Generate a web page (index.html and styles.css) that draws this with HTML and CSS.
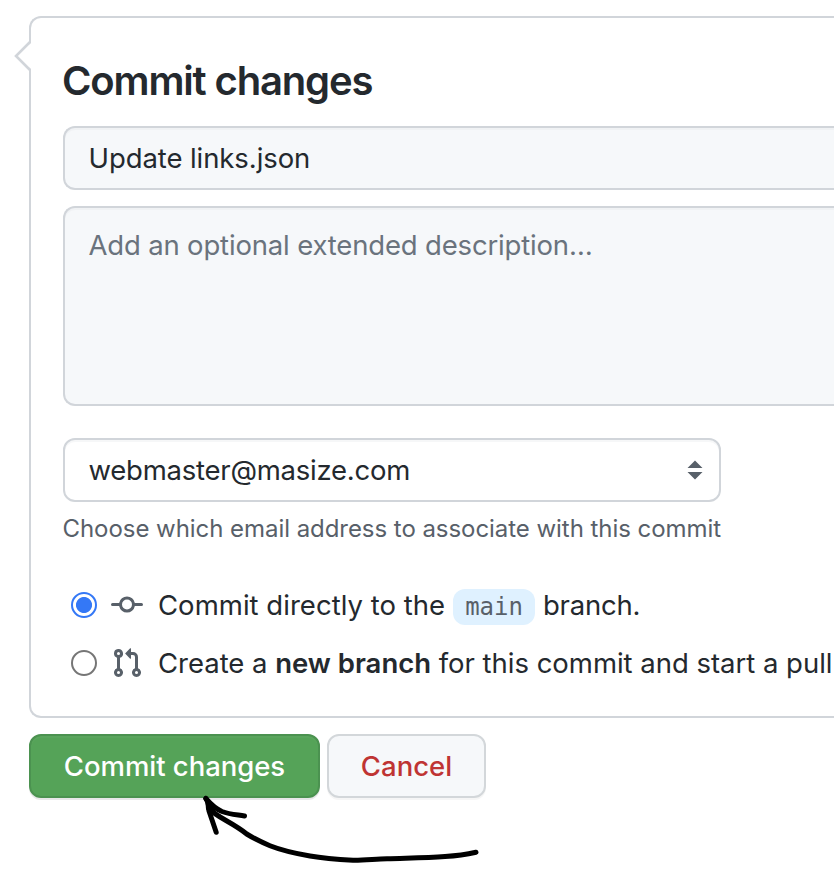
FILE: index.html
```html
<!DOCTYPE html>
<html lang="en">
<head>
<meta charset="utf-8">
<title>Commit changes</title>
<link rel="stylesheet" href="styles.css">
</head>
<body>
<form class="commit-form">
  <section class="panel">
    <svg class="caret" width="18" height="30" viewBox="0 0 18 30"><path class="caret-fill" d="M18 1 2 15l16 14z"/><path class="caret-line" d="M16 1 2 15l14 14"/></svg>
    <h1 class="title">Commit changes</h1>
    <div class="field summary"><span>Update links.json</span></div>
    <div class="field description"><span>Add an optional extended description…</span></div>
    <div class="field select">
      <span>webmaster@masize.com</span>
      <svg class="chevrons" width="16" height="20" viewBox="0 0 16 20"><path d="M8 0.5 15.5 8H.5zM8 19.500.5 12h15z"/></svg>
    </div>
    <p class="note">Choose which email address to associate with this commit</p>
    <div class="choices">
      <label class="choice">
        <input class="radio" type="radio" name="target" checked>
        <svg class="icon" width="32" height="32" viewBox="0 0 16 16"><path fill-rule="evenodd" d="M10.5 7.75a2.5 2.5 0 11-5 0 2.5 2.5 0 015 0zm1.43.75a4.002 4.002 0 01-7.86 0H.75a.75.75 0 110-1.5h3.32a4.001 4.001 0 017.86 0h3.32a.75.75 0 110 1.500h-3.320z"/></svg>
        <span class="t-direct">Commit directly to the</span>
        <code class="branch">main</code>
        <span class="t-branch">branch.</span>
      </label>
      <label class="choice">
        <input class="radio" type="radio" name="target">
        <svg class="icon" width="32" height="32" viewBox="0 0 16 16"><path fill-rule="evenodd" d="M7.177 3.073L9.573.677A.25.25 0 0110 .854v4.792a.25.25 0 01-.427.177L7.177 3.427a.25.25 0 010-.354zM3.75 2.5a.75.75 0 100 1.5.75.75 0 000-1.5zm-2.25.75a2.25 2.25 0 113 2.122v5.256a2.251 2.251 0 11-1.5 0V5.372A2.25 2.25 0 011.5 3.25zM11 2.5h-1V4h1a1 1 0 011 1v5.628a2.251 2.251 0 101.5 0V5A2.5 2.5 0 0011 2.5zm1 10.25a.75.75 0 111.5 0 .75.75 0 01-1.5 0zM3.75 12a.75.75 0 100 1.5.75.75 0 000-1.5z"/></svg>
        <span class="t-create">Create a <b>new branch</b> for this commit and start a pull</span>
      </label>
    </div>
  </section>
  <div class="actions">
    <button class="btn primary" type="button">Commit changes</button>
    <button class="btn danger" type="button">Cancel</button>
  </div>
</form>
<svg class="arrow" width="290" height="76" viewBox="198 792 290 76">
  <path d="M476 852.300C467 854.500 457 856 445 856.500C426 858 406 858 387 858.700C375 859 364 860.500 353 860.300C338 859.500 324 858.500 310 856C296 853.500 282 850.500 270 845.700C261 842 254 838.500 246.700 834C240 828.500 233 824.500 226 820.500C219 816.500 212 812 208.500 808"/>
  <path d="M205.800 798.500C211 804.500 216 809 222 811.500C230 814.500 237 814.700 244.500 816"/>
  <path d="M205.800 798.500C209 802 207.500 805 209 811L216.200 832.300M209 804L213 810"/>
</svg>
</body>
</html>
```
FILE: styles.css
```css
* { box-sizing: border-box; }

body {
  margin: 0;
  width: 834px;
  height: 870px;
  overflow: hidden;
  background: #fff;
  color: #24292e;
  font: 27.5px/40px Inter, "Liberation Sans", sans-serif;
  white-space: nowrap;
}

.commit-form { padding: 16px 0 0 29px; }

.panel {
  position: relative;
  height: 702px;
  padding: 32px 0 32px 32px;
  border: 2px solid #d1d5da;
  border-right: 0;
  border-radius: 12px 0 0 12px;
}

.caret { position: absolute; left: -17px; top: 23px; }
.caret-fill { fill: #fff; }
.caret-line { fill: none; stroke: #d1d5da; stroke-width: 2.6; }

.title {
  margin: 0 0 15px -1px;
  padding-top: 1px;
  font-size: 40px;
  line-height: 60px;
  font-weight: 600;
  letter-spacing: -1.15px;
}

.field {
  display: flex;
  align-items: center;
  padding: 0 23.5px;
  border: 2px solid #d1d5da;
  border-right: 0;
  border-radius: 12px 0 0 12px;
  background: #f6f8fa;
  box-shadow: inset 0 2px 0 rgba(225, 228, 232, 0.3);
}

.summary { height: 64px; margin-bottom: 16px; letter-spacing: -0.08px; }

.description {
  height: 200px;
  margin-bottom: 32px;
  padding-top: 17px;
  align-items: flex-start;
  color: #6a737d;
  letter-spacing: -0.17px;
}

.select {
  justify-content: space-between;
  width: 658px;
  height: 64px;
  padding-right: 16px;
  border-right: 2px solid #d1d5da;
  border-radius: 12px;
  background: #fff;
  letter-spacing: -0.24px;
}

.chevrons { fill: #586069; }

.note {
  margin: 9px 0 37px -0.5px;
  color: #586069;
  font-size: 24px;
  line-height: 36px;
  letter-spacing: -0.05px;
}

.choices { padding-left: 8px; }
.choice { display: flex; align-items: center; height: 42px; margin-bottom: 16px; }

.radio {
  appearance: none;
  flex: none;
  width: 26px;
  height: 26px;
  margin: 0 14px 0 0;
  border: 2px solid #767676;
  border-radius: 50%;
  background: #fff;
}

.radio:checked {
  border-color: #3478f6;
  background: radial-gradient(circle, #3478f6 7.600px, #fff 8.400px);
}

.icon { flex: none; margin-right: 15px; fill: #586069; }

.branch {
  height: 36px;
  margin: 4px 8px 0;
  padding: 0 12px;
  border-radius: 12px;
  background: #dff1ff;
  color: #586069;
  font: 24px/36px "DejaVu Sans Mono", monospace;
}

.t-direct { letter-spacing: 0.03px; }
.t-branch { letter-spacing: -0.2px; }
.t-create { letter-spacing: -0.02px; }

b { font-weight: 600; }

.actions { display: flex; gap: 7px; margin-top: 16px; }

.btn {
  height: 64px;
  padding: 0;
  border: 2px solid #d3d7da;
  border-radius: 12px;
  font: 500 27.5px/40px Inter, "Liberation Sans", sans-serif;
}

.primary {
  width: 291px;
  border-color: #4b9250;
  background: #55a358;
  color: #fff;
  font-weight: 550;
  letter-spacing: -0.04px;
  box-shadow: 0 2px 0 rgba(27, 31, 35, 0.1), inset 0 2px 0 rgba(255, 255, 255, 0.03);
}

.danger {
  width: 159px;
  background: #f6f8fa;
  color: #bf3433;
  box-shadow: 0 2px 0 rgba(27, 31, 35, 0.04);
}

.arrow {
  position: absolute;
  left: 198px;
  top: 792px;
  fill: none;
  stroke: #000;
  stroke-width: 5;
  stroke-linecap: round;
  stroke-linejoin: round;
}
```
